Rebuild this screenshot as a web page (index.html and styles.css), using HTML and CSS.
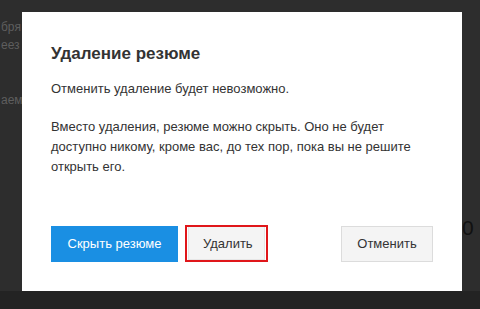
FILE: index.html
```html
<!DOCTYPE html>
<html lang="ru">
<head>
<meta charset="utf-8">
<link rel="stylesheet" href="styles.css">
</head>
<body>
<div class="page">
  <span class="bg-text t1">бря</span>
  <span class="bg-text t2">еез</span>
  <span class="bg-text t3">аем</span>
  <span class="bg-price">0 р</span>
</div>
<div class="modal">
  <h1 class="modal-title">Удаление резюме</h1>
  <p class="modal-text">Отменить удаление будет невозможно.</p>
  <p class="modal-text">Вместо удаления, резюме можно скрыть. Оно не будет доступно никому, кроме вас, до тех пор, пока вы не решите открыть его.</p>
  <div class="modal-actions">
    <button class="btn btn-primary">Скрыть резюме</button>
    <span class="highlight"><button class="btn btn-light">Удалить</button></span>
    <button class="btn btn-light btn-cancel">Отменить</button>
  </div>
</div>
</body>
</html>
```

FILE: styles.css
```css
html, body {
  margin: 0;
  padding: 0;
}
body {
  width: 480px;
  height: 309px;
  overflow: hidden;
  background: #2c2c2c;
  font-family: "Liberation Sans", Arial, sans-serif;
  position: relative;
}
.page {
  position: absolute;
  inset: 0;
  background: linear-gradient(#2d2d2d 0, #2d2d2d 291px, #232323 291px);
}
.bg-text {
  position: absolute;
  left: 1px;
  font-size: 12px;
  color: #5e5e5e;
  white-space: nowrap;
}
.t1 { top: 20px; }
.t2 { top: 38px; }
.t3 { top: 93px; }
.bg-price {
  position: absolute;
  left: 462px;
  top: 216px;
  font-size: 21px;
  color: #111;
  white-space: nowrap;
}
.modal {
  position: absolute;
  left: 22px;
  top: 12px;
  width: 440px;
  height: 279px;
  box-sizing: border-box;
  background: #fff;
  padding: 31px 29px 0 29px;
  color: #333;
}
.modal-title {
  margin: 0 0 14px 0;
  font-size: 17px;
  font-weight: bold;
  line-height: 22px;
  color: #333;
}
.modal-text {
  margin: 0 0 18px 0;
  font-size: 13px;
  line-height: 20px;
  color: #333;
}
.modal-actions {
  display: flex;
  align-items: center;
  margin-top: 48px;
}
.btn {
  height: 36px;
  box-sizing: border-box;
  font-family: inherit;
  font-size: 13px;
  border: 1px solid #dcdcdc;
  margin: 0;
  padding: 0 14px;
  cursor: pointer;
}
.btn-primary {
  width: 127px;
  background: #1a8fe3;
  border-color: #1a8fe3;
  color: #fff;
}
.highlight {
  display: flex;
  margin-left: 7px;
  border: 2px solid #e0161a;
  padding: 0 1px;
}
.btn-light {
  background: #f4f4f4;
  color: #333;
}
.highlight .btn-light {
  width: 77px;
  height: 33px;
  border: 1px solid #e6e6e6;
  border-top: none;
}
.btn-cancel {
  width: 92px;
  margin-left: auto;
}
```
